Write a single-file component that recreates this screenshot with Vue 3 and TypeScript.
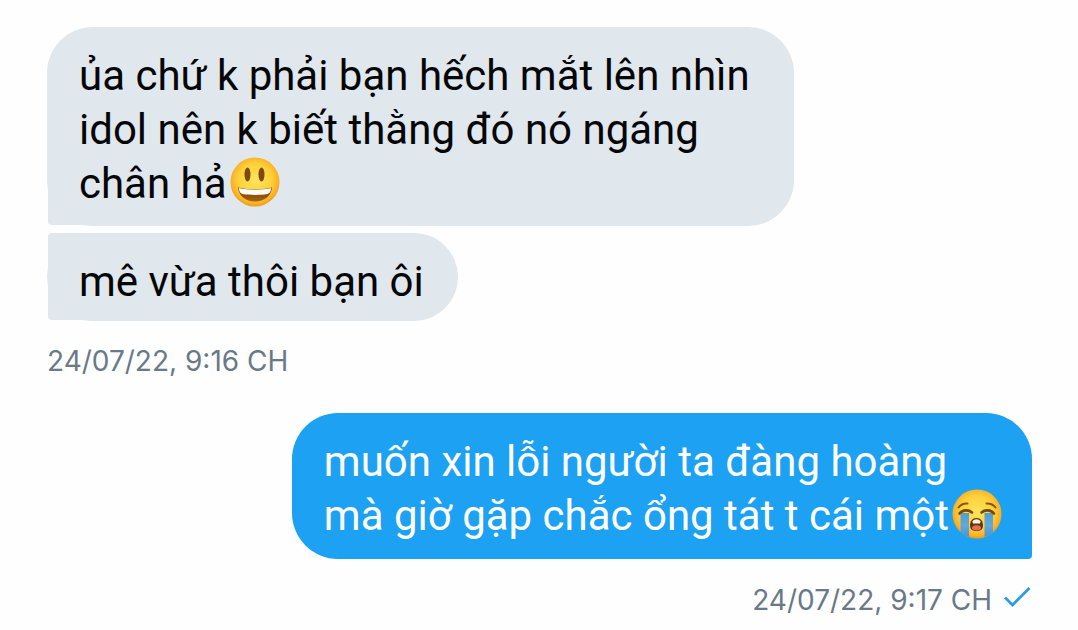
<script setup lang="ts">
type Emoji = 'grin' | 'sob'

interface Message {
  id: number
  lines: string[]
  emoji?: Emoji
}

interface Group {
  id: number
  own: boolean
  time: string
  messages: Message[]
}

const groups: Group[] = [
  {
    id: 1,
    own: false,
    time: '24/07/22, 9:16 CH',
    messages: [
      {
        id: 1,
        lines: [
          'ủa chứ k phải bạn hếch mắt lên nhìn',
          'idol nên k biết thằng đó nó ngáng',
          'chân hả',
        ],
        emoji: 'grin',
      },
      { id: 2, lines: ['mê vừa thôi bạn ôi'] },
    ],
  },
  {
    id: 2,
    own: true,
    time: '24/07/22, 9:17 CH',
    messages: [
      {
        id: 3,
        lines: ['muốn xin lỗi người ta đàng hoàng', 'mà giờ gặp chắc ổng tát t cái một'],
        emoji: 'sob',
      },
    ],
  },
]
</script>

<template>
  <main class="chat">
    <section v-for="group in groups" :key="group.id" class="group" :class="{ own: group.own }">
      <div v-for="message in group.messages" :key="message.id" class="bubble">
        <p class="text">
          <span v-for="(line, i) in message.lines" :key="i" class="line"
            >{{ line
            }}<svg
              v-if="message.emoji === 'grin' && i === message.lines.length - 1"
              class="emoji"
              viewBox="0 0 50 50"
              role="img"
              aria-label="😃"
            >
              <defs>
                <radialGradient id="grin-face" cx="0.5" cy="0.46" r="0.56">
                  <stop offset="0" stop-color="#ffe45c" />
                  <stop offset="0.6" stop-color="#fed03a" />
                  <stop offset="0.86" stop-color="#f9b126" />
                  <stop offset="1" stop-color="#e8951c" />
                </radialGradient>
                <linearGradient id="grin-mouth" x1="0" y1="0" x2="0" y2="1">
                  <stop offset="0" stop-color="#6b3a0c" />
                  <stop offset="1" stop-color="#a8640f" />
                </linearGradient>
              </defs>
              <circle cx="25" cy="25" r="24.5" fill="url(#grin-face)" />
              <ellipse cx="17.5" cy="17.5" rx="3" ry="7" fill="#7a4a12" />
              <ellipse cx="31.5" cy="17.5" rx="3" ry="7" fill="#7a4a12" />
              <path
                d="M8 30.5C18 33 32 33 42 30.5C41 39 34.500 44.500 25 44.500C15.500 44.500 9 39 8 30.500Z"
                fill="url(#grin-mouth)"
              />
              <path
                d="M8.800 31C18 33.200 32 33.200 41.200 31C41 34.500 39.500 36.500 37.500 37C30 38.200 20 38.200 12.500 37C10.500 36.500 9 34.500 8.800 31Z"
                fill="#fffdf5"
              />
            </svg><svg
              v-if="message.emoji === 'sob' && i === message.lines.length - 1"
              class="emoji"
              viewBox="0 0 50 50"
              role="img"
              aria-label="😭"
            >
              <defs>
                <radialGradient id="sob-face" cx="0.5" cy="0.46" r="0.56">
                  <stop offset="0" stop-color="#ffe45c" />
                  <stop offset="0.6" stop-color="#fed03a" />
                  <stop offset="0.86" stop-color="#f9b126" />
                  <stop offset="1" stop-color="#de8f22" />
                </radialGradient>
                <linearGradient id="sob-tear" x1="0" y1="0" x2="0" y2="1">
                  <stop offset="0" stop-color="#4f9bd2" />
                  <stop offset="0.5" stop-color="#62aade" />
                  <stop offset="1" stop-color="#4795d6" />
                </linearGradient>
              </defs>
              <circle cx="25" cy="25" r="24.5" fill="url(#sob-face)" />
              <path
                d="M8.500 24H17V47.800C14 47 11 45.500 8.500 43.300Z M32.500 24H41V43.400C38.700 45.400 36 46.900 32.500 47.800Z"
                fill="url(#sob-tear)"
              />
              <path
                d="M6.500 18.500C8.500 15.800 11.500 14.300 15.500 14.500 M43.500 18.500C41.500 15.800 38.500 14.300 34.500 14.500"
                fill="none"
                stroke="#8a5511"
                stroke-width="2"
                stroke-linecap="round"
              />
              <path
                d="M7.500 24.500C11 20.500 16.500 20.500 20 23.500 M42 24.500C38.500 20.500 33 20.500 29.500 23.500"
                fill="none"
                stroke="#74480f"
                stroke-width="2.600"
                stroke-linecap="round"
              />
              <path
                d="M24.500 29C28.800 29 31 32.500 31 36.500C31 40.300 28.500 42 24.500 42C20.500 42 18 40.300 18 36.500C18 32.500 20.200 29 24.500 29Z"
                fill="#6b320c"
              />
              <path d="M20.300 32.500C22.300 29.400 26.700 29.400 28.700 32.500L28 34.500H21Z" fill="#fff4dc" />
              <ellipse cx="24.500" cy="38.800" rx="4.500" ry="2.600" fill="#e0705a" />
            </svg>
          </span>
        </p>
      </div>
      <p class="meta">
        <time>{{ group.time }}</time>
        <svg v-if="group.own" class="check" viewBox="0 0 28 22" role="img" aria-label="Đã gửi">
          <path d="M1 11.500L8.500 19L25.500 2" fill="none" stroke="#2f9be6" stroke-width="2.800" />
        </svg>
      </p>
    </section>
  </main>
</template>

<style>
body {
  margin: 0;
  background: #fefefe;
}
</style>

<style scoped>
.chat {
  display: flex;
  flex-direction: column;
  gap: 33px;
  padding: 27px 46px 11px 47px;
  font-family: Inter, 'Noto Sans', sans-serif;
}

.group {
  display: flex;
  flex-direction: column;
  align-items: flex-start;
  gap: 7px;
}

.group.own {
  align-items: flex-end;
}

.bubble {
  position: relative;
  box-sizing: border-box;
  padding: 22px 44px 15px 32px;
  border-radius: 46px;
  background: #e0e7ed;
  color: #050607;
}

.bubble::before {
  content: '';
  position: absolute;
  left: 1px;
  bottom: 1px;
  width: 50px;
  height: 50px;
  border-radius: 4px;
  background: inherit;
}

.bubble + .bubble {
  padding-right: 34px;
  padding-bottom: 12px;
}

.bubble + .bubble::before {
  top: 0;
  height: auto;
}

.own .bubble {
  padding: 22px 30px 16px 32px;
  background: #1da1f2;
  color: #ffffff;
}

.own .bubble::before {
  right: 0;
  bottom: 0;
  left: auto;
}

.text {
  position: relative;
  margin: 0;
  font-family: Roboto, 'Noto Sans', sans-serif;
  font-size: 42px;
  line-height: 54px;
}

.line {
  display: block;
  white-space: nowrap;
}

.emoji {
  width: 50px;
  height: 50px;
  margin: -10px 0 -9px 3px;
  vertical-align: baseline;
}

.meta {
  display: flex;
  align-items: center;
  gap: 12px;
  margin: 14px 0 0;
  color: #697987;
  font-size: 28px;
  line-height: 38px;
}

.own .meta {
  margin-top: 15px;
}

.check {
  width: 28px;
  height: 22px;
  margin-bottom: 6px;
}
</style>
